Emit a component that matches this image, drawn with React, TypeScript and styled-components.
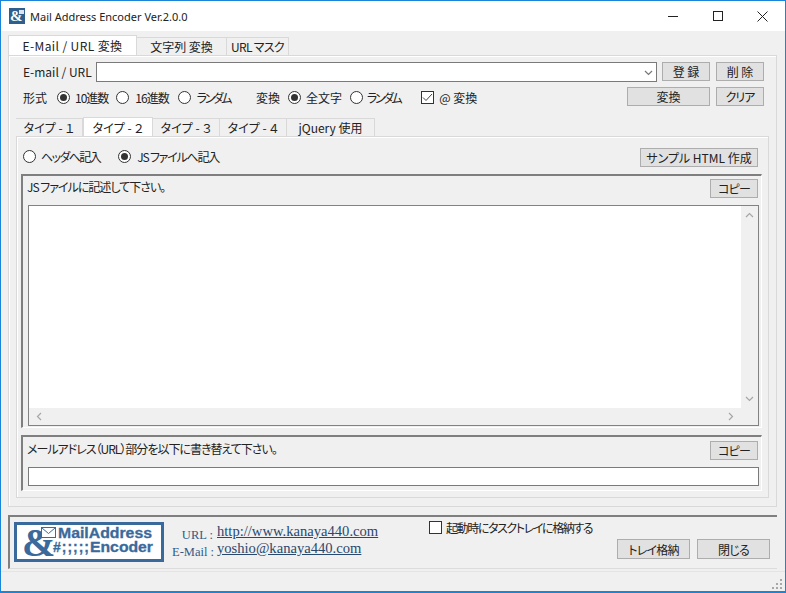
import React from 'react';
import styled, { createGlobalStyle } from 'styled-components';

const GlobalStyle = createGlobalStyle`
  html, body {
    margin: 0;
    padding: 0;
    background: #f0f0f0;
  }
  * {
    box-sizing: border-box;
  }
`;

const uiFont = `"Noto Sans CJK JP", "Liberation Sans", sans-serif`;

const Window = styled.div`
  width: 786px;
  height: 593px;
  display: flex;
  flex-direction: column;
  border: 1px solid #1a84d8;
  border-bottom-width: 2px;
  background: #f0f0f0;
  color: #222;
  font-family: ${uiFont};
  font-size: 12px;
  font-weight: 400;
  font-feature-settings: 'palt';
  overflow: hidden;
`;
const TitleBar = styled.div`
  height: 30px;
  flex: none;
  display: flex;
  align-items: center;
  background: #fff;
  padding-left: 8px;
`;
const TitleText = styled.span`
  margin-left: 5px;
  font-family: 'Noto Sans', sans-serif;
  font-size: 11px;
  font-weight: 400;
  color: #222;
`;
const WindowControls = styled.div`
  margin-left: auto;
  display: flex;
`;
const WindowControl = styled.div`
  width: 45px;
  height: 30px;
  display: flex;
  align-items: center;
  justify-content: center;
`;
const Content = styled.div`
  flex: 1;
  display: flex;
  flex-direction: column;
  padding: 4px 8px 0 7px;
`;
const TabStrip = styled.div<{ $height: number }>`
  height: ${(p) => p.$height}px;
  flex: none;
  display: flex;
  align-items: flex-end;
`;
const Tab = styled.div<{ $width: number; $active?: boolean; $small?: boolean; $track?: number }>`
  width: ${(p) => p.$width}px;
  height: ${(p) => (p.$active ? '100%' : p.$small ? 'calc(100% - 1px)' : 'calc(100% - 2px)')};
  display: flex;
  align-items: center;
  justify-content: center;
  background: ${(p) => (p.$active ? '#fff' : '#f0f0f0')};
  border: 1px solid #d9d9d9;
  border-bottom: 0;
  border-left-width: ${(p) => (p.$active ? 1 : 0)}px;
  letter-spacing: ${(p) => p.$track ?? 0}px;
  white-space: pre;
`;
const MainPage = styled.div`
  height: 452px;
  flex: none;
  display: flex;
  flex-direction: column;
  border: 1px solid #d9d9d9;
  box-shadow: inset 1px 1px 0 #fff;
  padding: 6px 7px 0 7px;
`;
const FormRow = styled.div<{ $gap: number }>`
  display: flex;
  align-items: flex-start;
  padding: 0 5px 0 7px;
  margin-bottom: ${(p) => p.$gap}px;
  height: 19px;
`;
const FieldLabel = styled.span`
  width: 73px;
  flex: none;
  line-height: 20px;
  white-space: pre;
`;
const Combo = styled.div`
  width: 561px;
  height: 20px;
  flex: none;
  display: flex;
  align-items: center;
  justify-content: flex-end;
  padding-right: 3px;
  background: #fff;
  border: 1px solid #7a7a7a;
`;
const Button = styled.div<{ $width: number; $height?: number; $left?: number; $track?: number }>`
  width: ${(p) => p.$width}px;
  height: ${(p) => p.$height ?? 19}px;
  margin-left: ${(p) => p.$left ?? 0}px;
  flex: none;
  display: flex;
  align-items: center;
  justify-content: center;
  background: #e1e1e1;
  border: 1px solid #adadad;
  letter-spacing: ${(p) => p.$track ?? 0}px;
  white-space: pre;
`;
const Choice = styled.label<{ $left?: number; $textGap?: number; $track?: number; $top?: number }>`
  display: flex;
  align-items: center;
  height: 19px;
  margin-top: ${(p) => p.$top ?? 1}px;
  margin-left: ${(p) => p.$left ?? 0}px;
  gap: ${(p) => p.$textGap ?? 5}px;
  letter-spacing: ${(p) => p.$track ?? 0}px;
  white-space: pre;
`;
const Radio = styled.span<{ $on?: boolean }>`
  position: relative;
  width: 13px;
  height: 13px;
  flex: none;
  border: 1px solid #333;
  border-radius: 50%;
  background: #fff;
  &::after {
    content: '';
    display: ${(p) => (p.$on ? 'block' : 'none')};
    position: absolute;
    left: 2px;
    top: 2px;
    width: 7px;
    height: 7px;
    border-radius: 50%;
    background: #333;
  }
`;
const CheckBox = styled.span`
  width: 13px;
  height: 13px;
  flex: none;
  display: flex;
  align-items: center;
  justify-content: center;
  border: 1px solid #333;
  background: #fff;
`;
const Spacer = styled.div`
  margin-left: auto;
`;
const InnerPage = styled.div`
  height: 362px;
  display: flex;
  flex-direction: column;
  border: 1px solid #d9d9d9;
  box-shadow: inset 1px 1px 0 #fff;
  padding: 11px 6px 0 4px;
`;
const TargetRow = styled.div`
  height: 19px;
  flex: none;
  display: flex;
  align-items: flex-start;
  padding: 0 4px 0 2px;
  margin-bottom: 7px;
`;
const Group = styled.div<{ $height: number; $top: number }>`
  height: ${(p) => p.$height}px;
  flex: none;
  display: flex;
  flex-direction: column;
  border-top: 2px solid #7f7f7f;
  border-left: 2px solid #7f7f7f;
  border-bottom: 1px solid #fff;
  border-right: 1px solid #fff;
  padding: ${(p) => p.$top}px 2px 0 5px;
  margin-bottom: 7px;
`;
const GroupHeader = styled.div`
  height: 19px;
  flex: none;
  display: flex;
  align-items: center;
  justify-content: space-between;
  padding-right: 1px;
  margin-bottom: 7px;
  white-space: pre;
`;
const GroupTitle = styled.span`
  margin-left: -1px;
  letter-spacing: -1px;
  transform: translateY(-2px);
`;
const CodeBox = styled.div`
  height: 221px;
  flex: none;
  display: grid;
  grid-template-columns: 1fr 17px;
  grid-template-rows: 1fr 17px;
  background: #fff;
  border: 1px solid #828282;
`;
const ScrollTrack = styled.div<{ $vertical?: boolean }>`
  display: flex;
  flex-direction: ${(p) => (p.$vertical ? 'column' : 'row')};
  align-items: center;
  justify-content: space-between;
  padding: ${(p) => (p.$vertical ? '5px 0' : '0 6px')};
  background: #f0f0f0;
`;
const ScrollCorner = styled.div`
  background: #f0f0f0;
`;
const TextLine = styled.div`
  height: 19px;
  flex: none;
  background: #fff;
  border: 1px solid #7a7a7a;
`;
const Footer = styled.div`
  margin-top: 8px;
  height: 54px;
  flex: none;
  display: flex;
  border-top: 2px solid #7f7f7f;
  border-left: 2px solid #7f7f7f;
  border-bottom: 1px solid #dcdcdc;
  padding: 4px 7px 0 4px;
`;
const Logo = styled.svg`
  width: 150px;
  height: 40px;
  flex: none;
  margin-top: 1px;
  overflow: visible;
`;
const Contact = styled.div`
  margin-left: 8px;
  margin-top: 2px;
  display: grid;
  grid-template-columns: 41px auto;
  grid-auto-rows: 17px;
  column-gap: 4px;
  font-family: 'Liberation Serif', serif;
  font-weight: 400;
  font-feature-settings: normal;
  align-items: center;
`;
const ContactLabel = styled.span`
  font-size: 12.5px;
  color: #2f5b88;
  text-align: right;
  white-space: pre;
  padding-top: 7px;
`;
const ContactLink = styled.a`
  font-size: 14.6px;
  color: #28486e;
  text-decoration: underline;
  white-space: pre;
`;
const FooterRight = styled.div`
  margin-left: auto;
  width: 341px;
  display: flex;
  flex-direction: column;
`;
const StartupChoice = styled.label`
  height: 13px;
  display: flex;
  align-items: center;
  gap: 4px;
  margin-bottom: 5px;
  letter-spacing: -1.4px;
  white-space: pre;
`;
const FooterButtons = styled.div`
  display: flex;
  justify-content: flex-end;
  gap: 7px;
`;
const StatusBar = styled.div`
  flex: 1;
  display: flex;
  align-items: flex-end;
  justify-content: flex-end;
  border-top: 1px solid #e4e4e4;
  margin: 2px -8px 0 -7px;
  padding: 0 2px 1px 0;
`;

const Chevron = ({ d, stroke = '#a6a6a6' }: { d: string; stroke?: string }) => (
  <svg width="9" height="9" viewBox="0 0 9 9" fill="none">
    <path d={d} stroke={stroke} strokeWidth="1.2" />
  </svg>
);

const App = () => (
  <>
    <GlobalStyle />
    <Window>
      <TitleBar>
        <svg width="16" height="16" viewBox="0 0 16 16">
          <rect width="16" height="16" fill="#2f5f8c" />
          <text x="1" y="13" fontFamily="Liberation Serif, serif" fontSize="15" fontWeight="700" fill="#fff">
            &amp;
          </text>
          <rect x="10" y="2" width="5" height="4" fill="#dbe6f0" />
        </svg>
        <TitleText>Mail Address Encoder Ver.2.0.0</TitleText>
        <WindowControls>
          <WindowControl>
            <svg width="10" height="10" viewBox="0 0 10 10">
              <path d="M0 5.5H10" stroke="#222" />
            </svg>
          </WindowControl>
          <WindowControl>
            <svg width="10" height="10" viewBox="0 0 10 10">
              <rect x="0.5" y="0.5" width="9" height="9" fill="none" stroke="#222" />
            </svg>
          </WindowControl>
          <WindowControl>
            <svg width="11" height="11" viewBox="0 0 11 11">
              <path d="M0.5 0.5L10.5 10.5M10.5 0.5L0.5 10.5" stroke="#222" />
            </svg>
          </WindowControl>
        </WindowControls>
      </TitleBar>
      <Content>
        <TabStrip $height={20}>
          <Tab $width={129} $active $track={0.4}>E-Mail / URL 変換</Tab>
          <Tab $width={90}>文字列 変換</Tab>
          <Tab $width={62} $track={-0.7}>URL マスク</Tab>
        </TabStrip>
        <MainPage>
          <FormRow $gap={6}>
            <FieldLabel>E-mail / URL</FieldLabel>
            <Combo>
              <Chevron d="M1 3L4.5 6.5L8 3" stroke="#777" />
            </Combo>
            <Button $width={48} $left={5}>登 録</Button>
            <Button $width={48} $left={6}>削 除</Button>
          </FormRow>
          <FormRow $gap={11}>
            <Choice>形式</Choice>
            <Choice $left={10} $track={-1}><Radio $on />10進数</Choice>
            <Choice $left={8} $textGap={6} $track={-1}><Radio />16進数</Choice>
            <Choice $left={9} $textGap={6} $track={-2.5}><Radio />ランダム</Choice>
            <Choice $left={26}>変換</Choice>
            <Choice $left={8}><Radio $on />全文字</Choice>
            <Choice $left={8} $textGap={4} $track={-2.5}><Radio />ランダム</Choice>
            <Choice $left={21}>
              <CheckBox>
                <svg width="11" height="11" viewBox="0 0 11 11" fill="none">
                  <path d="M1 5.5L4 8.5L10 2" stroke="#444" />
                </svg>
              </CheckBox>
              @ 変換
            </Choice>
            <Spacer />
            <Button $width={83}>変換</Button>
            <Button $width={48} $left={6} $track={-1}>クリア</Button>
          </FormRow>
          <TabStrip $height={19}>
            <Tab $width={67} $small>タイプ - １</Tab>
            <Tab $width={70} $active>タイプ - ２</Tab>
            <Tab $width={67} $small>タイプ - ３</Tab>
            <Tab $width={67} $small>タイプ - ４</Tab>
            <Tab $width={88} $small>jQuery 使用</Tab>
          </TabStrip>
          <InnerPage>
            <TargetRow>
              <Choice $top={-1} $track={-1.6}><Radio />ヘッダへ記入</Choice>
              <Choice $top={-1} $left={18} $textGap={6} $track={-1.2}><Radio $on />JS ファイルへ記入</Choice>
              <Spacer />
              <Button $width={118}>サンプル HTML 作成</Button>
            </TargetRow>
            <Group $height={254} $top={3}>
              <GroupHeader>
                <GroupTitle>JS ファイルに記述して下さい。</GroupTitle>
                <Button $width={48} $track={-0.8}>コピー</Button>
              </GroupHeader>
              <CodeBox>
                <div />
                <ScrollTrack $vertical>
                  <Chevron d="M1 6L4.5 2.5L8 6" />
                  <Chevron d="M1 3L4.5 6.5L8 3" />
                </ScrollTrack>
                <ScrollTrack>
                  <Chevron d="M6 1L2.5 4.5L6 8" />
                  <Chevron d="M3 1L6.5 4.5L3 8" />
                </ScrollTrack>
                <ScrollCorner />
              </CodeBox>
            </Group>
            <Group $height={56} $top={4}>
              <GroupHeader>
                <GroupTitle>メールアドレス（URL）部分を以下に書き替えて下さい。</GroupTitle>
                <Button $width={48} $track={-0.8}>コピー</Button>
              </GroupHeader>
              <TextLine />
            </Group>
          </InnerPage>
        </MainPage>
        <Footer>
          <Logo viewBox="0 0 150 40">
            <rect x="1.5" y="1.5" width="147" height="37" fill="#fff" stroke="#3a6a9b" strokeWidth="3" />
            <text x="8" y="34" fontFamily="Liberation Serif, serif" fontSize="40" fontWeight="700" fill="#3a6a9b">
              &amp;
            </text>
            <rect x="27.5" y="5.5" width="14" height="10" fill="#fff" stroke="#3a6a9b" />
            <path d="M28 6L34.5 11.5L41 6" fill="none" stroke="#3a6a9b" />
            <text x="44" y="16" textLength="94" lengthAdjust="spacingAndGlyphs" fontFamily="Liberation Sans, sans-serif" fontSize="14" fontWeight="700" fill="#3a6a9b" stroke="#3a6a9b" strokeWidth="0.3">
              MailAddress
            </text>
            <text x="39" y="30" textLength="36" fontFamily="Liberation Sans, sans-serif" fontSize="14" fontWeight="700" fill="#3a6a9b" stroke="#3a6a9b" strokeWidth="0.3">
              #;;;;;
            </text>
            <text x="76" y="30" textLength="63" lengthAdjust="spacingAndGlyphs" fontFamily="Liberation Sans, sans-serif" fontSize="14" fontWeight="700" fill="#3a6a9b" stroke="#3a6a9b" strokeWidth="0.3">
              Encoder
            </text>
          </Logo>
          <Contact>
            <ContactLabel>URL :</ContactLabel>
            <ContactLink>http://www.kanaya440.com</ContactLink>
            <ContactLabel>E-Mail :</ContactLabel>
            <ContactLink>yoshio@kanaya440.com</ContactLink>
          </Contact>
          <FooterRight>
            <StartupChoice>
              <CheckBox />
              起動時にタスクトレイに格納する
            </StartupChoice>
            <FooterButtons>
              <Button $width={73} $height={20} $track={-0.8}>トレイ格納</Button>
              <Button $width={73} $height={20} $track={-0.8}>閉じる</Button>
            </FooterButtons>
          </FooterRight>
        </Footer>
        <StatusBar>
          <svg width="12" height="12" viewBox="0 0 12 12" fill="#a8a8a8">
            <rect x="9" y="1" width="2" height="2" />
            <rect x="5" y="5" width="2" height="2" />
            <rect x="9" y="5" width="2" height="2" />
            <rect x="1" y="9" width="2" height="2" />
            <rect x="5" y="9" width="2" height="2" />
            <rect x="9" y="9" width="2" height="2" />
          </svg>
        </StatusBar>
      </Content>
    </Window>
  </>
);

export default App;
